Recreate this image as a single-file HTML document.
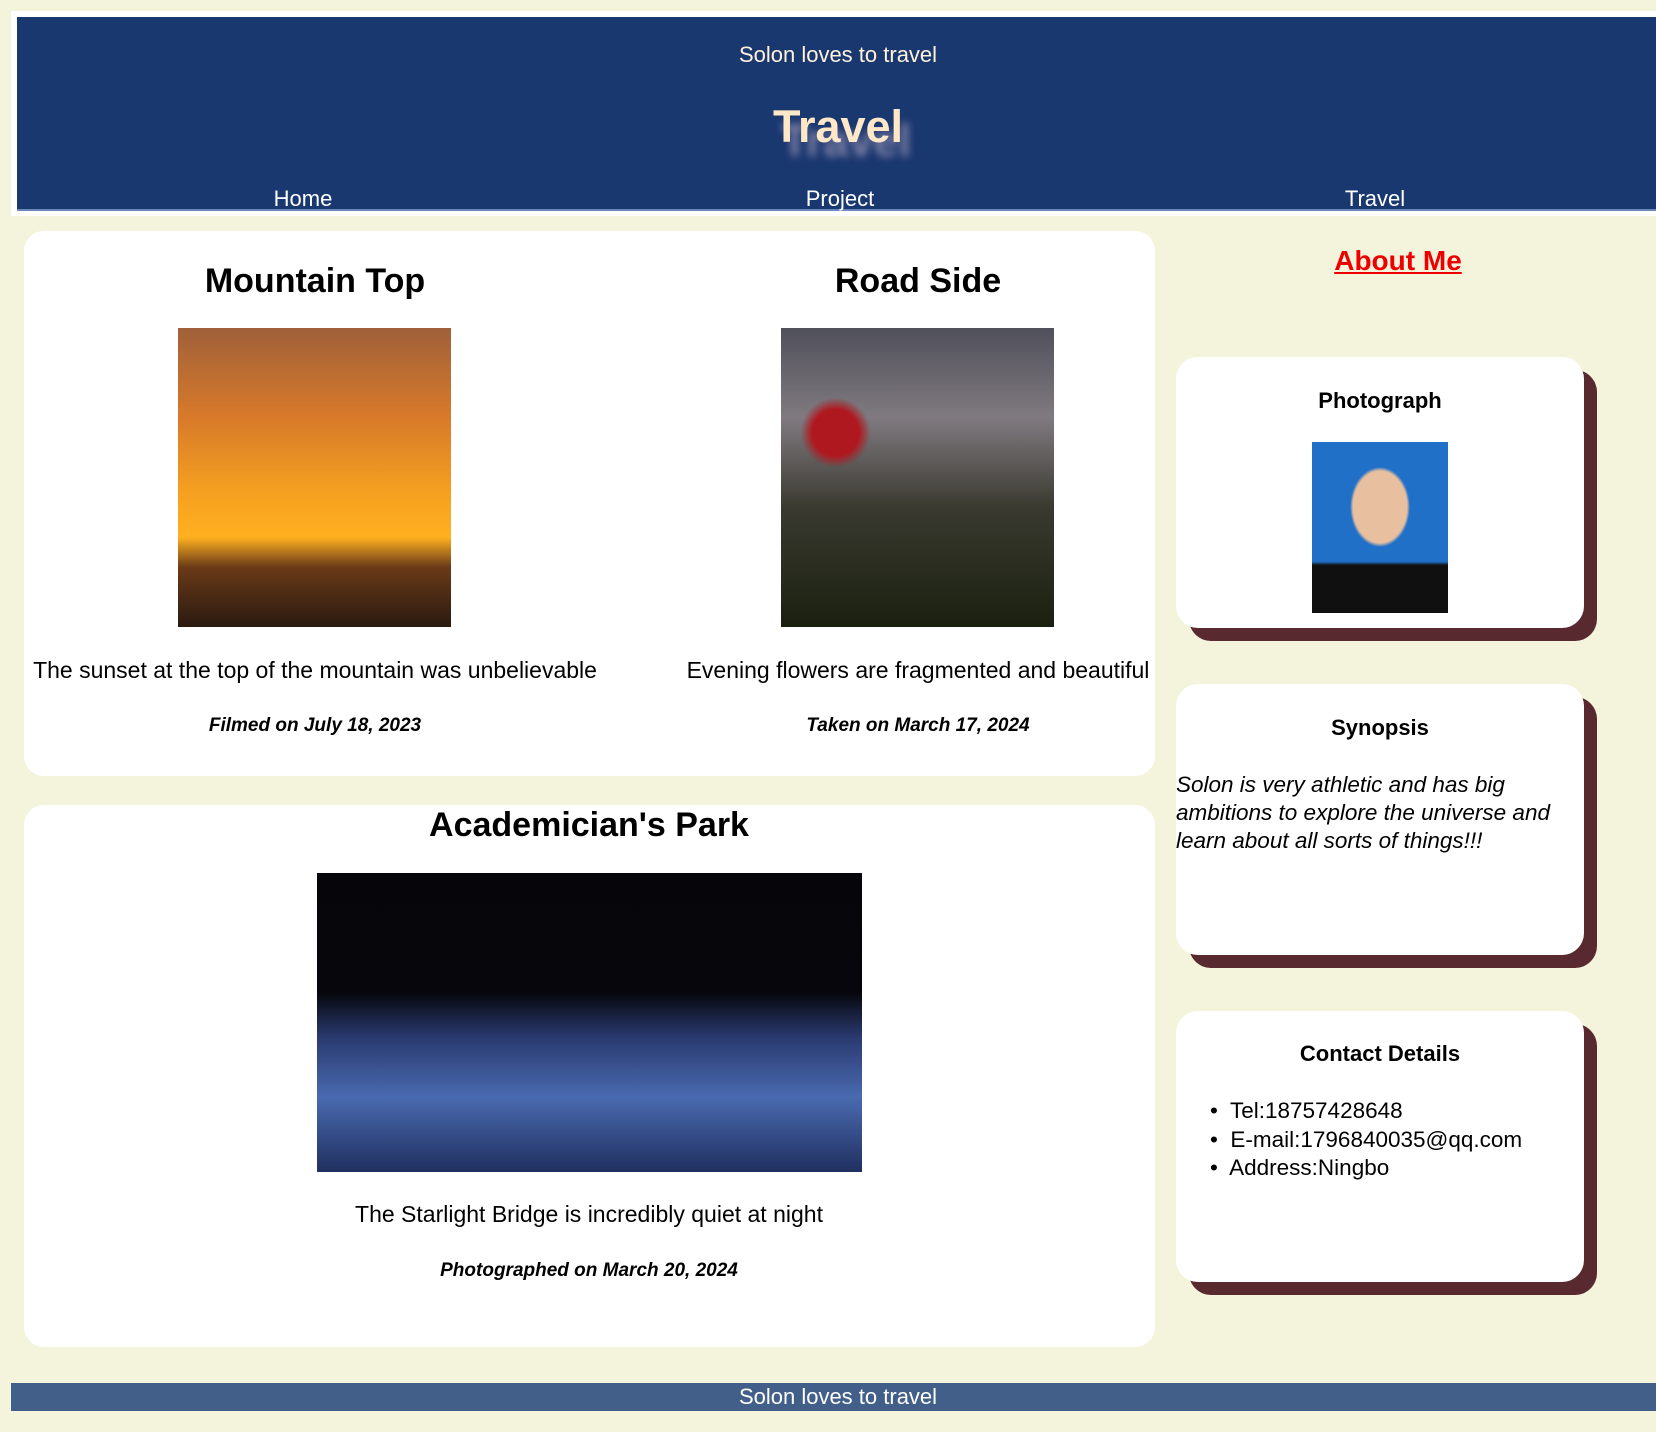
<!DOCTYPE html>
<html><head><meta charset="utf-8"><style>
*{margin:0;padding:0;box-sizing:border-box}
body{width:1656px;height:1432px;background:#f4f4dc;position:relative;overflow:hidden;font-family:"Liberation Sans",sans-serif;color:#000}
.a{position:absolute;white-space:nowrap}
.c{transform:translateX(-50%)}
.card{position:absolute;background:#fff;border-radius:20px}
.sc{position:absolute;background:#fff;border-radius:22px;box-shadow:13px 13px 0 #582a30;width:408px;height:271px;left:1176px}
.h{font-weight:bold;font-size:34px}
.cap{font-size:23px}
.dt{font-size:19px;font-style:italic;font-weight:bold}
.st{font-weight:bold;font-size:22px}
</style></head><body>
<div class="a" style="left:11px;top:11px;width:1645px;height:205px;background:#fff"></div>
<div class="a" style="left:17px;top:17px;width:1639px;height:194px;background:#1a3870;border-bottom:2px solid #6c88b8"></div>
<div class="a c" style="left:838px;top:42px;font-size:22px;color:#fff2dc">Solon loves to travel</div>
<div class="a c" style="left:838px;top:101px;font-size:45px;font-weight:bold;color:#ffe8c8;text-shadow:8px 14px 8px rgba(255,220,230,.45)">Travel</div>
<div class="a c" style="left:303px;top:186px;font-size:22px;color:#fff">Home</div>
<div class="a c" style="left:840px;top:186px;font-size:22px;color:#fff">Project</div>
<div class="a c" style="left:1375px;top:186px;font-size:22px;color:#fff">Travel</div>

<div class="card" style="left:24px;top:231px;width:1131px;height:545px"></div>
<div class="card" style="left:24px;top:805px;width:1131px;height:542px"></div>

<div class="a c h" style="left:315px;top:262px">Mountain Top</div>
<div class="a c h" style="left:918px;top:262px">Road Side</div>
<div class="a" style="left:178px;top:328px;width:273px;height:299px;background:linear-gradient(180deg,#a0603a 0%,#d87a2a 30%,#f5a020 55%,#ffb020 70%,#6a3a18 80%,#2a1a10 100%)"></div>
<div class="a" style="left:781px;top:328px;width:273px;height:299px;background:radial-gradient(circle at 20% 35%,#b01820 0 8%,transparent 12%),linear-gradient(180deg,#50505a 0%,#807a80 30%,#3a3a30 60%,#1a2010 100%)"></div>
<div class="a c cap" style="left:315px;top:657px">The sunset at the top of the mountain was unbelievable</div>
<div class="a c cap" style="left:918px;top:657px">Evening flowers are fragmented and beautiful</div>
<div class="a c dt" style="left:315px;top:715px">Filmed on July 18, 2023</div>
<div class="a c dt" style="left:918px;top:715px">Taken on March 17, 2024</div>

<div class="a c h" style="left:589px;top:806px">Academician's Park</div>
<div class="a" style="left:317px;top:873px;width:545px;height:299px;background:linear-gradient(180deg,#05050a 0%,#06060c 40%,#2a3a70 55%,#4a6ab0 75%,#203060 100%)"></div>
<div class="a c cap" style="left:589px;top:1201px">The Starlight Bridge is incredibly quiet at night</div>
<div class="a c dt" style="left:589px;top:1260px">Photographed on March 20, 2024</div>

<div class="a c" style="left:1398px;top:245px;font-size:28px;font-weight:bold;color:#e00;text-decoration:underline">About Me</div>

<div class="sc" style="top:357px"></div>
<div class="a c st" style="left:1380px;top:388px">Photograph</div>
<div class="a" style="left:1312px;top:442px;width:136px;height:171px;background:radial-gradient(ellipse 30px 40px at 50% 38%,#e8c0a0 90%,transparent 100%),linear-gradient(180deg,#2070c8 0%,#2070c8 70%,#101010 72%,#101010 100%)"></div>

<div class="sc" style="top:684px"></div>
<div class="a c st" style="left:1380px;top:715px">Synopsis</div>
<div class="a" style="left:1176px;top:771px;font-size:22.5px;font-style:italic;line-height:28px">Solon is very athletic and has big<br>ambitions to explore the universe and<br>learn about all sorts of things!!!</div>

<div class="sc" style="top:1011px"></div>
<div class="a c st" style="left:1380px;top:1041px">Contact Details</div>
<div class="a" style="left:1210px;top:1097px;font-size:22.5px;line-height:28.5px">•&nbsp; Tel:18757428648<br>•&nbsp; E-mail:1796840035@qq.com<br>•&nbsp; Address:Ningbo</div>

<div class="a" style="left:11px;top:1383px;width:1645px;height:28px;background:#425f8a"></div>
<div class="a c" style="left:838px;top:1384px;font-size:22px;color:#fff">Solon loves to travel</div>
</body></html>
